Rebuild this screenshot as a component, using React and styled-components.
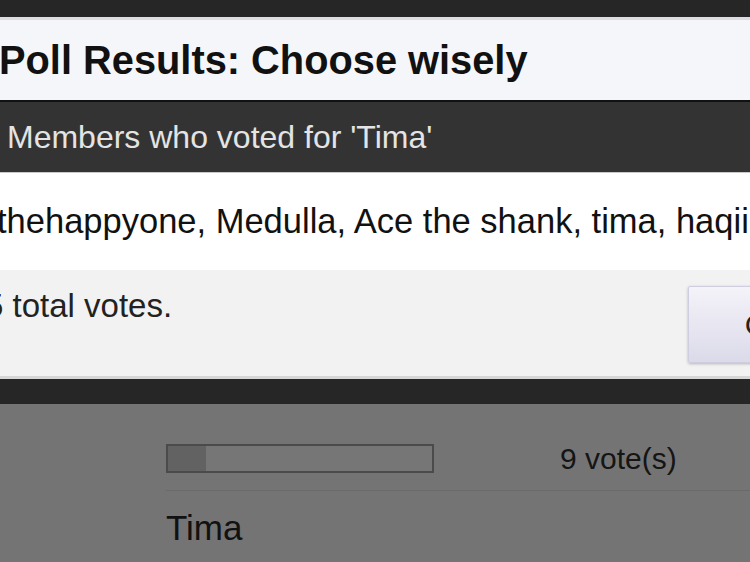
import styled, { createGlobalStyle } from "styled-components";

const GlobalStyle = createGlobalStyle`
  html, body {
    margin: 0;
    padding: 0;
    overflow: hidden;
    background: #747474;
    font-family: "Liberation Sans", Arial, Helvetica, sans-serif;
  }
`;

const voters = ["thehappyone", "Medulla", "Ace the shank", "tima", "haqiii"];

const App = () => {
  return (
    <>
      <GlobalStyle />
      <Overlay>
        <Modal>
          <TitleBar>Poll Results: Choose wisely</TitleBar>
          <SectionHeader>Members who voted for 'Tima'</SectionHeader>
          <VoterList>{voters.join(", ")}</VoterList>
          <Footer>
            <TotalVotes>5 total votes.</TotalVotes>
            <CloseButton>Close</CloseButton>
          </Footer>
        </Modal>
      </Overlay>
      <PageBehind>
        <ResultRow>
          <Bar>
            <BarFill style={{ width: `${(9 / 62) * 100}%` }} />
          </Bar>
          <VoteCount>9 vote(s)</VoteCount>
        </ResultRow>
        <OptionLabel>Tima</OptionLabel>
      </PageBehind>
    </>
  );
};

export default App;

const Overlay = styled.div`
  background: #262626;
  padding: 17px 0 25px;
`;

const Modal = styled.div`
  width: 930px;
  margin-left: -20px;
  display: flex;
  flex-direction: column;
`;

const TitleBar = styled.h1`
  margin: 0;
  height: 80px;
  box-sizing: content-box;
  display: flex;
  align-items: center;
  padding-left: 19px;
  background: #f5f6fa;
  border-top: 3px solid #dcdce2;
  border-bottom: 2px solid #111;
  font-size: 39.8px;
  font-weight: 700;
  color: #111;
`;

const SectionHeader = styled.div`
  height: 70px;
  display: flex;
  align-items: center;
  padding-left: 27px;
  background: #333;
  border-bottom: 1px solid #c9c9c9;
  color: #e4e4e4;
  font-size: 32px;
`;

const VoterList = styled.div`
  height: 97px;
  display: flex;
  align-items: center;
  padding-left: 17px;
  background: #fff;
  color: #111;
  font-size: 34.5px;
  white-space: nowrap;
`;

const Footer = styled.div`
  height: 106px;
  display: flex;
  justify-content: space-between;
  align-items: flex-start;
  padding: 0 32px 0 5px;
  background: #f2f2f2;
  border-bottom: 3px solid #d6d6d6;
`;

const TotalVotes = styled.div`
  margin-top: 17px;
  font-size: 33px;
  line-height: 38px;
  color: #222;
`;

const CloseButton = styled.button`
  margin-top: 16px;
  width: 190px;
  height: 77px;
  border: 1px solid #cfcde0;
  border-radius: 2px;
  background: linear-gradient(#f4f3f9, #dbdae9);
  box-shadow: 0 1px 3px rgba(0, 0, 0, 0.25);
  font-family: inherit;
  font-size: 30px;
  color: #222;
`;

const PageBehind = styled.div`
  background: #747474;
  padding: 40px 0 0 166px;
`;

const ResultRow = styled.div`
  display: flex;
  align-items: center;
  height: 29px;
  padding-bottom: 17px;
  border-bottom: 1px solid #6a6a6a;
`;

const Bar = styled.div`
  width: 264px;
  height: 25px;
  border: 2px solid #4b4b4b;
  background: #767676;
  display: flex;
`;

const BarFill = styled.div`
  background: #626262;
  height: 100%;
`;

const VoteCount = styled.div`
  margin-left: 126px;
  font-size: 30px;
  color: #151515;
`;

const OptionLabel = styled.div`
  padding-top: 17px;
  font-size: 35px;
  color: #111;
`;
